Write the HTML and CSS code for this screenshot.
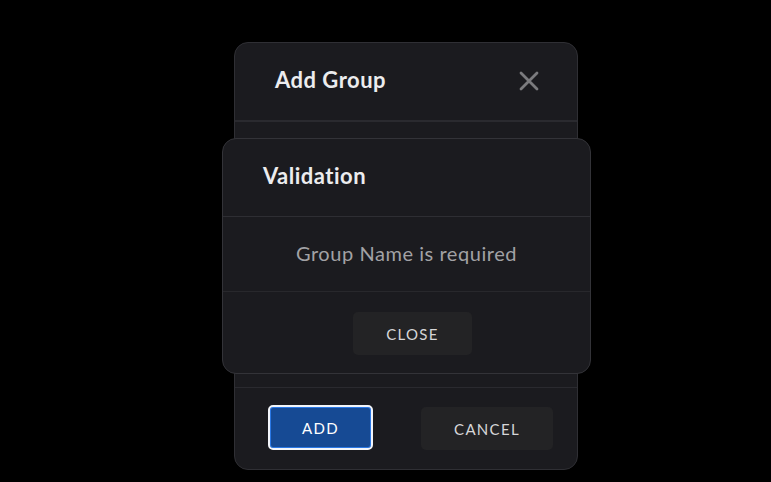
FILE: index.html
```html
<!DOCTYPE html>
<html>
<head>
<meta charset="utf-8">
<link rel="stylesheet" href="styles.css">
</head>
<body>
<div class="stage">
  <div class="dialog">
    <div class="dlg-head">
      <h2 class="dlg-title">Add Group</h2>
      <button class="icon-btn" aria-label="Close">
        <svg width="20" height="20" viewBox="0 0 20 20"><path d="M2 2 L18 18 M18 2 L2 18" stroke="#7b7b7e" stroke-width="2.8" stroke-linecap="round"/></svg>
      </button>
    </div>
    <div class="dlg-body"></div>
    <div class="dlg-foot">
      <button class="btn btn-primary">ADD</button>
      <button class="btn btn-cancel">CANCEL</button>
    </div>
  </div>
  <div class="alert">
    <div class="alert-head"><h2 class="dlg-title">Validation</h2></div>
    <div class="alert-body">Group Name is required</div>
    <div class="alert-foot"><button class="btn btn-close">CLOSE</button></div>
  </div>
</div>
</body>
</html>
```
FILE: styles.css
```css
html, body {
  margin: 0;
  padding: 0;
  background: #000;
  font-family: Lato, "Open Sans", sans-serif;
  color: #e8e8ea;
}
.stage {
  position: relative;
  width: 771px;
  height: 482px;
  padding-top: 42px;
  padding-left: 234px;
  box-sizing: border-box;
}
.dialog {
  width: 344px;
  height: 428px;
  box-sizing: border-box;
  background: #1b1b1f;
  border: 1px solid #2f2f34;
  border-radius: 14px;
  display: flex;
  flex-direction: column;
}
.dlg-head {
  height: 77px;
  display: flex;
  align-items: center;
  justify-content: space-between;
  padding: 0 38px 0 40px;
  border-bottom: 2px solid #2a2a2f;
}
.dlg-title {
  margin: 0 0 4px 0;
  font-size: 22px;
  font-weight: 700;
  color: #ececee;
  letter-spacing: 0.5px;
}
.icon-btn {
  background: none;
  border: 0;
  padding: 0;
  width: 20px;
  height: 20px;
  display: flex;
  margin-bottom: 1px;
}
.dlg-body {
  flex: 1;
  border-bottom: 1px solid #2a2a2f;
}
.dlg-foot {
  height: 81px;
  display: flex;
  align-items: center;
  padding: 0 24px 0 33px;
  justify-content: space-between;
}
.btn {
  font-family: inherit;
  font-size: 15px;
  letter-spacing: 1.3px;
  border: 0;
  border-radius: 5px;
  color: #d6d6d8;
  background: #232325;
}
.btn-primary {
  width: 105px;
  height: 45px;
  background: #164a94;
  color: #fff;
  border: 2px solid #f2f5fa;
  box-shadow: inset 0 0 0 1px #2a78e6;
  margin-top: -2px;
}
.btn-cancel {
  width: 132px;
  height: 43px;
}
.alert {
  position: absolute;
  left: 222px;
  top: 138px;
  width: 369px;
  height: 236px;
  box-sizing: border-box;
  background: #1b1b1f;
  border: 1px solid #333338;
  border-radius: 14px;
  display: flex;
  flex-direction: column;
}
.alert-head {
  height: 77px;
  display: flex;
  align-items: center;
  padding-left: 40px;
  border-bottom: 1px solid #2e2e33;
}
.alert-body {
  height: 75px;
  display: flex;
  align-items: center;
  justify-content: center;
  font-size: 20px;
  letter-spacing: 0.55px;
  color: #a2a2a5;
  border-bottom: 1px solid #28282c;
  padding-bottom: 2px;
  box-sizing: border-box;
}
.alert-foot {
  flex: 1;
  display: flex;
  align-items: center;
  justify-content: center;
  padding-left: 12px;
}
.btn-close {
  width: 119px;
  height: 43px;
  margin-top: 2px;
}
```
